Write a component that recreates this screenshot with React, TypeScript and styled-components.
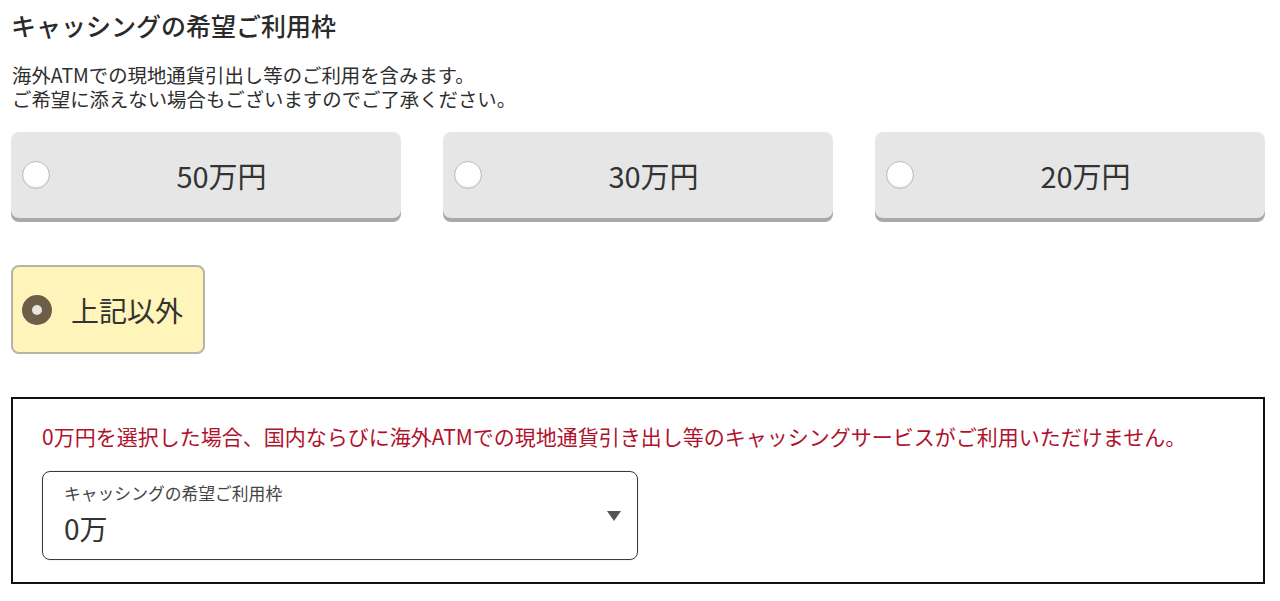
import React from "react";
import styled, { createGlobalStyle } from "styled-components";

const GlobalStyle = createGlobalStyle`
  html, body {
    margin: 0;
    padding: 0;
    background: #ffffff;
  }
  body {
    font-family: "Noto Sans CJK JP", "Noto Sans", sans-serif;
    color: #333333;
  }
`;

const Page = styled.div`
  padding: 0 15px 20px 11px;
  width: 1254px;
`;

const Title = styled.h2`
  margin: 0;
  padding-top: 8px;
  font-size: 25px;
  line-height: 34px;
  font-weight: 500;
  color: #2a2a2a;
`;

const Description = styled.p`
  margin: 21px 0 0 1px;
  font-size: 19.4px;
  line-height: 24px;
  color: #2e2e2e;
`;

const OptionGrid = styled.div`
  margin-top: 21px;
  display: grid;
  grid-template-columns: repeat(3, 390px);
  column-gap: 42px;
`;

const Card = styled.label<{ $selected?: boolean }>`
  box-sizing: border-box;
  display: flex;
  align-items: center;
  height: ${(p) => (p.$selected ? "89px" : "86px")};
  border-radius: 8px;
  cursor: pointer;
  background: ${(p) => (p.$selected ? "#fff4b9" : "#e6e6e6")};
  border: ${(p) => (p.$selected ? "2px solid #bab2a2" : "none")};
  box-shadow: ${(p) => (p.$selected ? "none" : "0 4px 0 #a9a9a9")};
  padding: ${(p) => (p.$selected ? "0 22px 0 9px" : "0 8px 0 11px")};
  width: ${(p) => (p.$selected ? "194px" : "auto")};
`;

const Radio = styled.span<{ $checked?: boolean }>`
  flex: none;
  box-sizing: border-box;
  width: ${(p) => (p.$checked ? "30px" : "28px")};
  height: ${(p) => (p.$checked ? "30px" : "28px")};
  border-radius: 50%;
  background: ${(p) => (p.$checked ? "#e9e5de" : "#ffffff")};
  border: ${(p) => (p.$checked ? "10px solid #6c5e49" : "1.5px solid #b9b9b9")};
  box-shadow: ${(p) =>
    p.$checked ? "none" : "inset 0 -1px 2px rgba(0,0,0,0.12)"};
`;

const CardText = styled.span<{ $center?: boolean }>`
  flex: 1;
  text-align: ${(p) => (p.$center ? "center" : "left")};
  padding-left: ${(p) => (p.$center ? "0" : "19px")};
  font-size: ${(p) => (p.$center ? "29px" : "28px")};
  line-height: 36px;
  color: #333333;
  white-space: nowrap;
`;

const OtherRow = styled.div`
  margin-top: 47px;
`;

const NoticeBox = styled.section`
  margin-top: 43px;
  border: 2px solid #111111;
  padding: 23px 29px 22px 29px;
`;

const NoticeText = styled.p`
  margin: 0;
  font-size: 21px;
  line-height: 28px;
  color: #b0122c;
  white-space: nowrap;
`;

const SelectBox = styled.div`
  margin-top: 21px;
  box-sizing: border-box;
  width: 596px;
  height: 89px;
  border: 1px solid #3a3a3a;
  border-radius: 8px;
  padding: 11px 16px 0 21px;
  display: flex;
  align-items: center;
  box-shadow: 0 0 2px rgba(0, 0, 0, 0.15);
`;

const SelectValueGroup = styled.div`
  flex: 1;
  align-self: flex-start;
  display: flex;
  flex-direction: column;
`;

const SelectLabel = styled.span`
  font-size: 16.8px;
  line-height: 20px;
  color: #444444;
`;

const SelectValue = styled.span`
  margin-top: 7px;
  font-size: 28px;
  line-height: 36px;
  color: #333333;
`;

const Arrow = styled.svg`
  flex: none;
  margin-top: -10px;
`;

const amounts = ["50万円", "30万円", "20万円"];

export default function App() {
  return (
    <>
      <GlobalStyle />
      <Page>
        <Title>キャッシングの希望ご利用枠</Title>
        <Description>
          海外ATMでの現地通貨引出し等のご利用を含みます。
          <br />
          ご希望に添えない場合もございますのでご了承ください。
        </Description>
        <OptionGrid>
          {amounts.map((a) => (
            <Card key={a}>
              <Radio />
              <CardText $center>{a}</CardText>
            </Card>
          ))}
        </OptionGrid>
        <OtherRow>
          <Card $selected>
            <Radio $checked />
            <CardText>上記以外</CardText>
          </Card>
        </OtherRow>
        <NoticeBox>
          <NoticeText>
            0万円を選択した場合、国内ならびに海外ATMでの現地通貨引き出し等のキャッシングサービスがご利用いただけません。
          </NoticeText>
          <SelectBox>
            <SelectValueGroup>
              <SelectLabel>キャッシングの希望ご利用枠</SelectLabel>
              <SelectValue>0万</SelectValue>
            </SelectValueGroup>
            <Arrow width="14" height="10" viewBox="0 0 14 10">
              <path d="M0 0 H14 L7 10 Z" fill="#555555" />
            </Arrow>
          </SelectBox>
        </NoticeBox>
      </Page>
    </>
  );
}
